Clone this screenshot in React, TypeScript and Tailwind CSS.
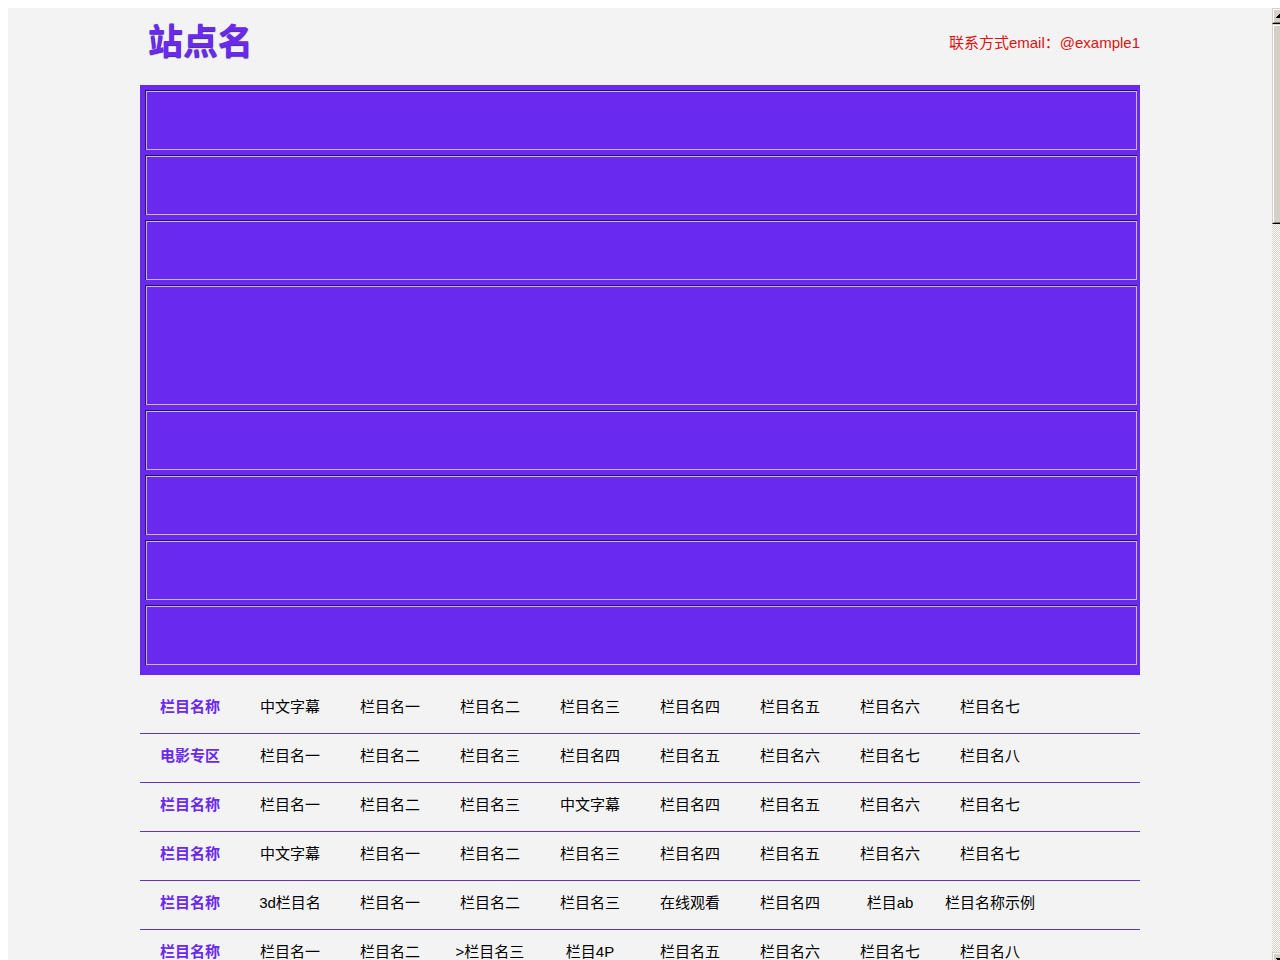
import { clsx } from "clsx";

const banners = ["short", "short", "short", "tall", "short", "short", "short", "short"];

const rows = [
  { title: "栏目名称", items: ["中文字幕", "栏目名一", "栏目名二", "栏目名三", "栏目名四", "栏目名五", "栏目名六", "栏目名七"] },
  { title: "电影专区", items: ["栏目名一", "栏目名二", "栏目名三", "栏目名四", "栏目名五", "栏目名六", "栏目名七", "栏目名八"] },
  { title: "栏目名称", items: ["栏目名一", "栏目名二", "栏目名三", "中文字幕", "栏目名四", "栏目名五", "栏目名六", "栏目名七"] },
  { title: "栏目名称", items: ["中文字幕", "栏目名一", "栏目名二", "栏目名三", "栏目名四", "栏目名五", "栏目名六", "栏目名七"] },
  { title: "栏目名称", items: ["3d栏目名", "栏目名一", "栏目名二", "栏目名三", "在线观看", "栏目名四", "栏目ab", "栏目名称示例"] },
  { title: "栏目名称", items: ["栏目名一", "栏目名二", ">栏目名三", "栏目4P", "栏目名五", "栏目名六", "栏目名七", "栏目名八"] },
];

function Scrollbar() {
  return (
    <div aria-hidden="true" className="flex w-2 shrink-0 flex-col overflow-hidden">
      <div className="h-4 w-4 shrink-0 border border-[#d4d0c8] border-b-black bg-[#d4d0c8]">
        <div className="h-full border-t border-l border-b border-t-white border-l-white border-b-[#808080] pt-1 pl-[2px]">
          <svg viewBox="0 0 8 4" className="h-1 w-2" shapeRendering="crispEdges">
            <path d="M3 0h2v1h1v1h1v1h1v1H0V3h1V2h1V1h1z" />
          </svg>
        </div>
      </div>
      <div className="h-[200px] w-4 shrink-0 border border-[#d4d0c8] border-b-black bg-[#d4d0c8]">
        <div className="h-full border-t border-l border-b border-t-white border-l-white border-b-[#808080]" />
      </div>
      <div className="w-4 grow bg-[conic-gradient(#d4d0c8_25%,#fff_0_50%,#d4d0c8_0_75%,#fff_0)] bg-[length:2px_2px]" />
      <div className="h-2 w-4 shrink-0 overflow-hidden border-t border-l border-[#d4d0c8] bg-[#d4d0c8]">
        <div className="h-full border-t border-l border-white pt-1 pl-[2px]">
          <svg viewBox="0 0 8 4" className="h-1 w-2" shapeRendering="crispEdges">
            <path d="M0 0h8v1H7v1H6v1H5v1H3V3H2V2H1V1H0z" />
          </svg>
        </div>
      </div>
    </div>
  );
}

export default function App() {
  return (
    <div className="flex h-screen overflow-hidden bg-white pt-2 pl-2 font-['Liberation_Sans','Noto_Sans_CJK_SC',sans-serif] text-[15px] text-black">
      <div className="min-w-0 grow overflow-hidden bg-[#f3f3f3]">
        <div className="mx-auto max-w-[1000px]">
          <header className="flex h-[77px] items-start justify-between">
            <h1 className="pl-2 text-[35px] leading-[68px] font-bold text-[#6a29ee] [text-shadow:0_1px_1px_#3b2380]">
              站点名
            </h1>
            <p className="leading-[70px] text-[#e01010]">联系方式email：@example1</p>
          </header>

          <section className="flex flex-col gap-[5px] bg-[#6a29ee] pt-[5px] pr-[3px] pb-[10px] pl-[5px]">
            {banners.map((size, i) => (
              <div
                key={i}
                className={clsx(
                  "border-t border-l border-[#24146b]",
                  size === "tall" ? "h-[120px]" : "h-[60px]"
                )}
              >
                <div className="h-full border border-[#c9b8ee]" />
              </div>
            ))}
          </section>

          <nav className="pt-[10px]">
            {rows.map((row, i) => (
              <ul key={i} className="flex h-[49px] border-b border-[#6633b9] leading-[44px]">
                <li className="w-[100px] text-center font-bold text-[#6a29ee]">
                  <a href="#">{row.title}</a>
                </li>
                {row.items.map((item) => (
                  <li key={item} className="w-[100px] text-center whitespace-nowrap">
                    <a href="#">{item}</a>
                  </li>
                ))}
              </ul>
            ))}
          </nav>
        </div>
      </div>
      <Scrollbar />
    </div>
  );
}
